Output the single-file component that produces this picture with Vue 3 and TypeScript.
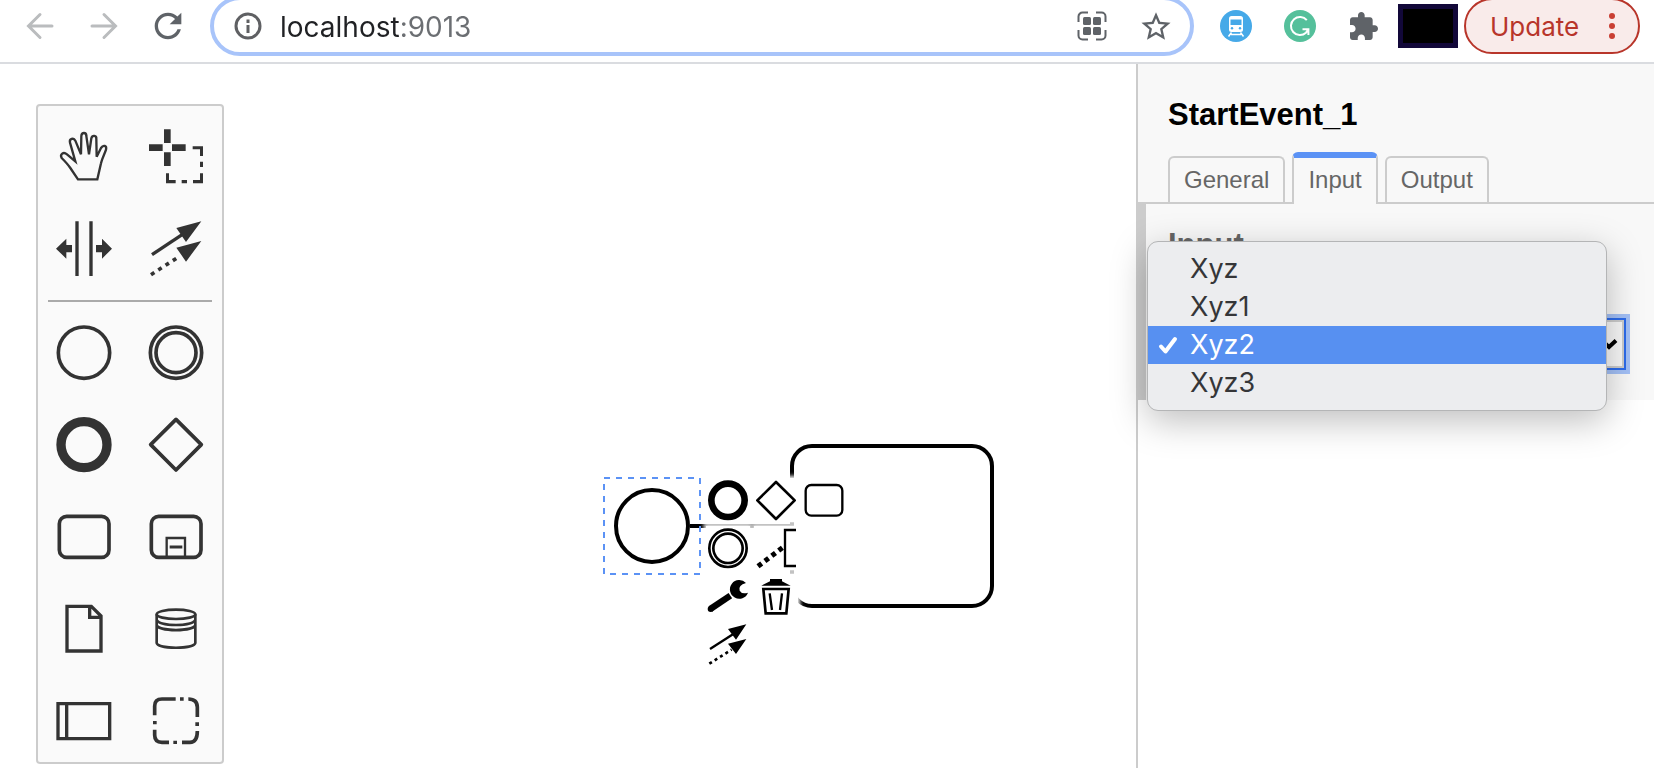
<script setup lang="ts">
import { ref } from 'vue'

interface Tool {
  id: string
  label: string
  box: string
}

const address = ref('localhost:9013')

const topTools: Tool[] = [
  { id: 'hand', label: 'Activate the hand tool', box: '54 48 276 276' },
  { id: 'lasso', label: 'Activate the lasso tool', box: '330 48 276 276' },
  { id: 'space', label: 'Activate the create/remove space tool', box: '54 324 276 276' },
  { id: 'connect', label: 'Activate the global connect tool', box: '330 324 276 276' },
]

const shapeTools: Tool[] = [
  { id: 'start', label: 'Create StartEvent', box: '54 36 276 276' },
  { id: 'intermediate', label: 'Create Intermediate Event', box: '330 36 276 276' },
  { id: 'end', label: 'Create EndEvent', box: '54 312 276 276' },
  { id: 'gateway', label: 'Create Gateway', box: '330 312 276 276' },
  { id: 'task', label: 'Create Task', box: '54 -132 276 276' },
  { id: 'subprocess', label: 'Create expanded SubProcess', box: '330 -132 276 276' },
  { id: 'data', label: 'Create DataObjectReference', box: '54 144 276 276' },
  { id: 'store', label: 'Create DataStoreReference', box: '330 144 276 276' },
  { id: 'pool', label: 'Create Pool/Participant', box: '54 420 276 276' },
  { id: 'group', label: 'Create Group', box: '330 420 276 276' },
]

const padTools: Tool[] = [
  { id: 'pad-end', label: 'Append EndEvent', box: '348 144 132 132' },
  { id: 'pad-gateway', label: 'Append Gateway', box: '492 144 132 132' },
  { id: 'pad-task', label: 'Append Task', box: '636 144 132 132' },
  { id: 'pad-intermediate', label: 'Append Intermediate Event', box: '348 288 132 132' },
  { id: 'pad-note', label: 'Append TextAnnotation', box: '492 288 132 132' },
  { id: 'pad-wrench', label: 'Change type', box: '348 432 132 132' },
  { id: 'pad-trash', label: 'Remove', box: '492 432 132 132' },
  { id: 'pad-connect', label: 'Connect', box: '348 576 132 132' },
]

const tabs = ['General', 'Input', 'Output']
const activeTab = ref('Input')

const options = ['Xyz', 'Xyz1', 'Xyz2', 'Xyz3']
const selected = ref('Xyz2')
</script>

<template>
  <div class="window">
    <header class="toolbar">
      <nav class="nav">
        <button type="button" class="icon-btn faint" aria-label="Back">
          <svg viewBox="0 0 32 32"><path d="M28 16H5M16 4.500L4.500 16L16 27.500" /></svg>
        </button>
        <button type="button" class="icon-btn faint" aria-label="Forward">
          <svg viewBox="0 0 32 32"><path d="M4 16H27M16 4.500L27.500 16L16 27.500" /></svg>
        </button>
        <button type="button" class="icon-btn solid" aria-label="Reload">
          <svg viewBox="2.4 2.4 19.2 19.2"><path d="M17.650 6.350C16.200 4.900 14.210 4 12 4c-4.420 0-7.990 3.580-7.990 8s3.570 8 7.990 8c3.730 0 6.840-2.550 7.730-6h-2.080c-.82 2.330-3.040 4-5.650 4-3.310 0-6-2.690-6-6s2.690-6 6-6c1.660 0 3.140.69 4.220 1.780L13 11h7V4l-2.350 2.350z" /></svg>
        </button>
      </nav>

      <div class="omnibox">
        <button type="button" class="icon-btn" aria-label="Site information">
          <svg viewBox="0 0 32 32">
            <circle cx="16" cy="16" r="12" fill="none" stroke="#5f6063" stroke-width="3" />
            <path d="M14.500 9.500h3v3.500h-3zM14.500 15h3v8h-3z" fill="#5f6063" />
          </svg>
        </button>
        <input v-model="address" class="address" type="text" aria-label="Address" spellcheck="false" />
        <button type="button" class="icon-btn" aria-label="Create QR code">
          <svg viewBox="0 0 32 32">
            <path d="M2.500 12V6.500a4 4 0 0 1 4-4H12M20 2.500h5.500a4 4 0 0 1 4 4V12M29.500 20v5.500a4 4 0 0 1-4 4H20M12 29.500H6.500a4 4 0 0 1-4-4V20" fill="none" stroke="#5f6368" stroke-width="2" />
            <g fill="#5f6368">
              <rect x="7" y="7" width="8" height="8" rx="1.500" />
              <rect x="17" y="7" width="8" height="8" rx="1.500" />
              <rect x="7" y="17" width="8" height="8" rx="1.500" />
              <rect x="17" y="17" width="8" height="8" rx="1.500" />
            </g>
          </svg>
        </button>
        <button type="button" class="icon-btn solid" aria-label="Bookmark this tab">
          <svg viewBox="1 0.5 22 22"><path d="M22 9.240l-7.190-.62L12 2 9.190 8.630 2 9.240l5.460 4.730L5.820 21 12 17.270 18.180 21l-1.630-7.030L22 9.240zM12 15.400l-3.760 2.270 1-4.280-3.320-2.880 4.380-.38L12 6.100l1.710 4.040 4.380.38-3.320 2.880 1 4.280L12 15.400z" /></svg>
        </button>
      </div>

      <div class="extensions">
        <button type="button" class="icon-btn" aria-label="Train extension">
          <svg viewBox="0 0 32 32">
            <circle cx="16" cy="16" r="16" fill="#46a9e8" />
            <path d="M11.500 6h9a2.500 2.500 0 0 1 2.500 2.500v11a2.500 2.500 0 0 1-2.500 2.500h-9a2.500 2.500 0 0 1-2.500-2.500v-11a2.500 2.500 0 0 1 2.500-2.500z" fill="#fff" />
            <path d="M10.500 9.500h11v5.500h-11z" fill="#46a9e8" />
            <circle cx="12" cy="18.300" r="1.200" fill="#46a9e8" />
            <circle cx="20" cy="18.300" r="1.200" fill="#46a9e8" />
            <path d="M11.500 22.500L8.500 26.500M20.500 22.500L23.500 26.500M11 24.500h10" stroke="#fff" stroke-width="1.500" />
          </svg>
        </button>
        <button type="button" class="icon-btn" aria-label="Grammar extension">
          <svg viewBox="0 0 32 32">
            <circle cx="16" cy="16" r="16" fill="#55c09b" />
            <path d="M22.800 10.200A9 9 0 1 0 22 22.700L24.300 19.500M18.500 19.200H24.400V25" fill="none" stroke="#fff" stroke-width="2" />
          </svg>
        </button>
        <button type="button" class="icon-btn solid" aria-label="Extensions">
          <svg viewBox="0.5 -0.5 24 24"><path d="M20.500 11H19V7c0-1.100-.9-2-2-2h-4V3.500C13 2.120 11.880 1 10.500 1S8 2.120 8 3.500V5H4c-1.100 0-1.990.9-1.990 2v3.800H3.500c1.490 0 2.700 1.210 2.700 2.700s-1.210 2.700-2.700 2.700H2V20c0 1.100.9 2 2 2h3.800v-1.500c0-1.490 1.210-2.700 2.700-2.700 1.490 0 2.700 1.210 2.700 2.700V22H17c1.100 0 2-.9 2-2v-4h1.500c1.380 0 2.500-1.120 2.500-2.500S21.880 11 20.500 11z" /></svg>
        </button>
      </div>
      <button type="button" class="profile" aria-label="Profile"></button>
      <button type="button" class="update">
        <span>Update</span>
        <svg viewBox="0 0 8 28" aria-hidden="true">
          <circle cx="4" cy="4" r="3" /><circle cx="4" cy="14" r="3" /><circle cx="4" cy="24" r="3" />
        </svg>
      </button>
    </header>

    <main class="modeler">
      <section class="canvas">
        <div class="palette">
          <div class="tools">
            <button v-for="tool in topTools" :key="tool.id" type="button" class="tool" :aria-label="tool.label">
              <svg :viewBox="tool.box">
                <path v-if="tool.id === 'hand'" class="line" stroke-width="7" d="M174 268L151 234Q143 222 125 204C119 193 130 184 141 193L166 214L150 158C147 146 161 142 166 152L183 193L184 138C185 126 199 126 199 138L207 193L214 145C217 134 230 136 229 147L230 200L243 174C250 163 261 167 258 179C254 192 246 205 243 220L232 268Z" />
                <g v-else-if="tool.id === 'lasso'" class="fill">
                  <path d="M432 118h20v41h-20zM432 187h20v41h-20zM387 163h41v20h-41zM456 163h41v20h-41z" />
                  <path d="M518 169h31v29h-9v-20h-22zM540 215h9v16h-9zM438 250h9v20h20v10h-29zM485 270h16v10h-16zM519 270h21v-20h9v30h-30z" />
                </g>
                <path v-else-if="tool.id === 'space'" class="fill" d="M166 394h10v164h-10zM208 394h10v164h-10zM108 476L139 446V465H156V487H139V506ZM276 476L246 446V465H228V487H246V506Z" />
                <g v-else>
                  <path class="line" stroke-width="10" d="M396 494L492 430" />
                  <path class="line" stroke-width="11" stroke-dasharray="12 14" d="M393 554L480 498" />
                  <path class="fill" d="M544 394L469 414L498 456ZM544 453L469 473L498 515Z" />
                </g>
              </svg>
            </button>
          </div>
          <hr class="separator" />
          <div class="tools">
            <button v-for="tool in shapeTools" :key="tool.id" type="button" class="tool" :aria-label="tool.label">
              <svg :viewBox="tool.box">
                <circle v-if="tool.id === 'start'" class="line" stroke-width="11" cx="192" cy="188" r="77" />
                <g v-else-if="tool.id === 'intermediate'" class="line">
                  <circle stroke-width="11" cx="468" cy="188" r="77" />
                  <circle stroke-width="11" cx="468" cy="188" r="60" />
                </g>
                <circle v-else-if="tool.id === 'end'" class="line" stroke-width="28" cx="192" cy="464" r="69" />
                <path v-else-if="tool.id === 'gateway'" class="line" stroke-width="11" stroke-linejoin="round" d="M468 388L544 464L468 540L392 464Z" />
                <rect v-else-if="tool.id === 'task'" class="line" stroke-width="11" x="118" y="-41" width="149" height="123" rx="22" />
                <g v-else-if="tool.id === 'subprocess'" class="line">
                  <rect stroke-width="11" x="394" y="-41" width="149" height="123" rx="22" />
                  <path stroke-width="7" d="M440 80V24H495V80" />
                  <path stroke-width="9" d="M449 51H487" />
                </g>
                <path v-else-if="tool.id === 'data'" class="line" stroke-width="10" d="M141 229H214L243 258V363H141ZM209 229V262H243" />
                <g v-else-if="tool.id === 'store'" class="line" stroke-width="8">
                  <ellipse cx="468" cy="253" rx="58" ry="14" />
                  <path d="M410 253V339C414 358 522 358 526 339V253M410 270C420 290 516 290 526 270M410 286C420 305 516 305 526 286" />
                </g>
                <path v-else-if="tool.id === 'pool'" class="line" stroke-width="10" d="M114 521H269V626H114ZM140 521V626" />
                <g v-else>
                  <path class="line" stroke-width="11" d="M404 556V528Q404 507 426 507H467M505 507Q532 507 532 532V561M532 603Q532 637 510 637H486M447 637H426Q404 637 404 615V599" />
                  <path class="fill" d="M480 502h11v10h-11zM526 577h11v11h-11zM460 632h11v10h-11zM399 573h11v10h-11z" />
                </g>
              </svg>
            </button>
          </div>
        </div>

        <svg class="diagram" viewBox="590 430 420 200" role="img" aria-label="Start event connected to a task">
          <path d="M690 526H792" stroke="#000" stroke-width="4" />
          <circle cx="652" cy="526" r="36" fill="#fff" stroke="#000" stroke-width="4" />
          <rect x="792" y="446" width="200" height="160" rx="20" fill="#fff" stroke="#000" stroke-width="4" />
          <rect x="604" y="478" width="96" height="96" fill="none" stroke="#5b92f5" stroke-width="2" stroke-dasharray="6 6" />
        </svg>

        <div class="context-pad">
          <button v-for="tool in padTools" :key="tool.id" type="button" :class="['pad-entry', tool.id]" :aria-label="tool.label">
            <svg :viewBox="tool.box">
              <circle v-if="tool.id === 'pad-end'" class="line" stroke-width="20" cx="414" cy="211" r="50" />
              <path v-else-if="tool.id === 'pad-gateway'" class="line" stroke-width="8" stroke-linejoin="round" d="M558 156L614 211L558 267L502 211Z" />
              <rect v-else-if="tool.id === 'pad-task'" class="line" stroke-width="7" x="647" y="165" width="110" height="92" rx="17" />
              <g v-else-if="tool.id === 'pad-intermediate'" class="line" stroke-width="8">
                <circle cx="414" cy="355" r="56" />
                <circle cx="414" cy="355" r="44" />
              </g>
              <g v-else-if="tool.id === 'pad-note'" class="line">
                <path stroke-width="7" d="M618 300H585V408H618" />
                <path stroke-width="15" stroke-dasharray="14 12" d="M504 409L580 351" />
              </g>
              <g v-else-if="tool.id === 'pad-wrench'">
                <path class="line" stroke-width="19" d="M361 537L421 497" />
                <circle class="fill" cx="362" cy="537" r="9" />
                <path class="fill" d="M468 459A28 28 0 1 0 474 488Q456 494 449 482Q444 465 468 459Z" />
              </g>
              <g v-else-if="tool.id === 'pad-trash'">
                <path class="fill" d="M514 467L540 454V447H576V454L602 467Z" />
                <path class="line" stroke-width="8" d="M520 477H596L589 550H527Z" />
                <path class="line" stroke-width="7" d="M539 490L546 540M576 490L570 540" />
              </g>
              <g v-else>
                <path class="line" stroke-width="7" d="M360 657L430 612" />
                <path class="line" stroke-width="8" stroke-dasharray="9 10" d="M358 701L425 659" />
                <path class="fill" d="M469 583L414 597L438 629ZM469 627L414 641L438 672Z" />
              </g>
            </svg>
          </button>
        </div>
      </section>

      <aside class="properties">
        <h1 class="title">StartEvent_1</h1>
        <div class="tabs" role="tablist">
          <button
            v-for="tab in tabs"
            :key="tab"
            type="button"
            role="tab"
            :aria-selected="tab === activeTab"
            :class="['tab', { active: tab === activeTab }]"
            @click="activeTab = tab"
          >{{ tab }}</button>
        </div>
        <div class="group">
          <h2 id="group-title" class="group-title">Input</h2>
          <div class="field">
            <select v-model="selected" class="select" aria-labelledby="group-title">
              <option v-for="option in options" :key="option" :value="option">{{ option }}</option>
            </select>
            <svg class="chevron" viewBox="0 0 20 14" aria-hidden="true"><path d="M3 3.500L10 10L17 3.500" /></svg>
          </div>
          <ul class="menu" role="listbox" aria-labelledby="group-title">
            <li
              v-for="option in options"
              :key="option"
              role="option"
              :aria-selected="option === selected"
              :class="['option', { chosen: option === selected }]"
              @click="selected = option"
            >
              <svg class="check" viewBox="0 0 20 20" aria-hidden="true"><path v-if="option === selected" d="M3 11.500L7.500 16.500L17 4" /></svg>
              <span>{{ option }}</span>
            </li>
          </ul>
        </div>
      </aside>
    </main>
  </div>
</template>

<style>
body {
  margin: 0;
  background: #fff;
}
</style>

<style scoped>
* {
  box-sizing: border-box;
}

.window {
  display: flex;
  flex-direction: column;
  height: 100vh;
  overflow: hidden;
  font-family: "Liberation Sans", Arial, sans-serif;
}

button {
  padding: 0;
  border: 0;
  background: none;
  font: inherit;
  cursor: pointer;
}

svg {
  display: block;
}

.toolbar {
  display: flex;
  flex: none;
  align-items: center;
  height: 64px;
  padding: 0 14px 10px 24px;
  border-bottom: 2px solid #dadce0;
  background: #fff;
  font-family: Inter, Roboto, sans-serif;
}

.nav,
.extensions {
  display: flex;
  gap: 32px;
}

.icon-btn {
  flex: none;
  width: 32px;
  height: 32px;
}

.icon-btn svg {
  width: 100%;
  height: 100%;
}

.faint path {
  fill: none;
  stroke: #babcbe;
  stroke-width: 3;
  stroke-linecap: round;
}

.solid path {
  fill: #5f6368;
}

.omnibox {
  display: flex;
  flex: 1;
  align-items: center;
  gap: 32px;
  min-width: 0;
  height: 60px;
  margin: 0 26px;
  padding: 0 18px;
  border: 4px solid #a8c4fa;
  border-radius: 30px;
}

.address {
  flex: 1;
  min-width: 0;
  height: 42px;
  margin-left: -16px;
  padding: 2px 0 0;
  border: 0;
  outline: 0;
  background: linear-gradient(to right, #202124 120px, #6b6e72 0);
  background-clip: text;
  color: transparent;
  font: 28px/40px Inter, Roboto, sans-serif;
}

.profile {
  width: 60px;
  height: 44px;
  margin: 0 6px 0 18px;
  border: 5px solid #120839;
  background: #000;
}

.update {
  display: flex;
  align-items: center;
  justify-content: space-between;
  width: 176px;
  height: 56px;
  padding: 0 22px 0 24px;
  border: 2px solid #b8352a;
  border-radius: 28px;
  background: #f9ebea;
  color: #b8352a;
  font-size: 26px;
}

.update svg {
  width: 8px;
  height: 28px;
  fill: #c93f33;
}

.modeler {
  display: flex;
  flex: 1;
  min-height: 0;
}

.canvas {
  position: relative;
  flex: 1;
  min-width: 0;
  overflow: hidden;
}

.palette {
  width: 188px;
  margin: 40px 0 0 36px;
  border: 2px solid #ccc;
  border-radius: 4px;
  background: #fafafa;
}

.tools {
  display: grid;
  grid-template-columns: 1fr 1fr;
}

.tool svg {
  width: 92px;
  height: 92px;
}

.line {
  fill: none;
  stroke: #333;
}

.fill {
  fill: #333;
}

.separator {
  margin: 10px 10px 0;
  border: 0;
  border-top: 2px solid #aaa;
}

.diagram {
  position: absolute;
  left: 590px;
  top: 366px;
  width: 420px;
  height: 200px;
}

.context-pad {
  position: absolute;
  left: 706px;
  top: 414px;
  display: grid;
  grid-template-columns: repeat(3, 44px);
  gap: 4px;
}

.pad-entry {
  height: 44px;
  background: #fff;
  box-shadow: 0 0 4px 2px #fff;
}

.pad-intermediate,
.pad-wrench,
.pad-connect {
  grid-column: 1;
}

.pad-entry svg {
  width: 44px;
  height: 44px;
}

.pad-entry .line {
  stroke: #000;
}

.pad-entry .fill {
  fill: #000;
}

.properties {
  flex: none;
  width: 518px;
  border-left: 2px solid #ccc;
  background: linear-gradient(#f8f8f8, #f8f8f8) top / 100% 150px no-repeat;
}

.title {
  margin: 0;
  padding: 33px 30px 19px;
  color: #000;
  font-size: 31px;
  line-height: 36px;
}

.tabs {
  display: flex;
  align-items: flex-end;
  gap: 7px;
  padding: 0 30px;
  border-bottom: 2px solid #ccc;
}

.tab {
  padding: 8px 14px;
  border: 2px solid #ccc;
  border-bottom: 0;
  border-radius: 6px 6px 0 0;
  background: #f8f8f8;
  color: #666;
  font-size: 24px;
  line-height: 28px;
}

.tab.active {
  margin-bottom: -2px;
  padding-bottom: 10px;
  border-top: 6px solid #5b92f5;
}

.group {
  position: relative;
  padding: 23px 28px 30px 22px;
  border-left: 8px solid #ccc;
  background: #f8f8f8;
}

.group-title {
  margin: 0 0 55px;
  color: #666;
  font-size: 31px;
  line-height: 36px;
}

.field {
  position: relative;
}

.select {
  display: block;
  width: 100%;
  height: 52px;
  padding: 0 40px 0 12px;
  border: 2px solid #2c6bea;
  border-radius: 0;
  outline: 4px solid #a3c0f6;
  appearance: none;
  background: #f8f8f8;
  box-shadow: inset 0 0 0 2px #ccc;
  color: #333;
  font: 24px "Liberation Sans", Arial, sans-serif;
}

.chevron {
  position: absolute;
  top: 19px;
  right: 7px;
  width: 20px;
  height: 14px;
  pointer-events: none;
}

.chevron path {
  fill: none;
  stroke: #000;
  stroke-width: 4;
}

.menu {
  position: absolute;
  top: 37px;
  left: 1px;
  right: 47px;
  margin: 0;
  padding: 8px 0;
  border: 1px solid #b4b5b6;
  border-radius: 11px;
  background: #ecedef;
  box-shadow: 0 10px 36px rgba(0, 0, 0, 0.26);
  color: #353638;
  font: 27px/38px Inter, Roboto, sans-serif;
  list-style: none;
}

.option {
  display: flex;
  align-items: center;
  gap: 12px;
  height: 38px;
  padding: 0 10px;
}

.option.chosen {
  background: #5790f1;
  color: #fff;
}

.check {
  width: 20px;
  height: 20px;
}

.check path {
  fill: none;
  stroke: #fff;
  stroke-width: 4;
  stroke-linecap: round;
  stroke-linejoin: round;
}
</style>
